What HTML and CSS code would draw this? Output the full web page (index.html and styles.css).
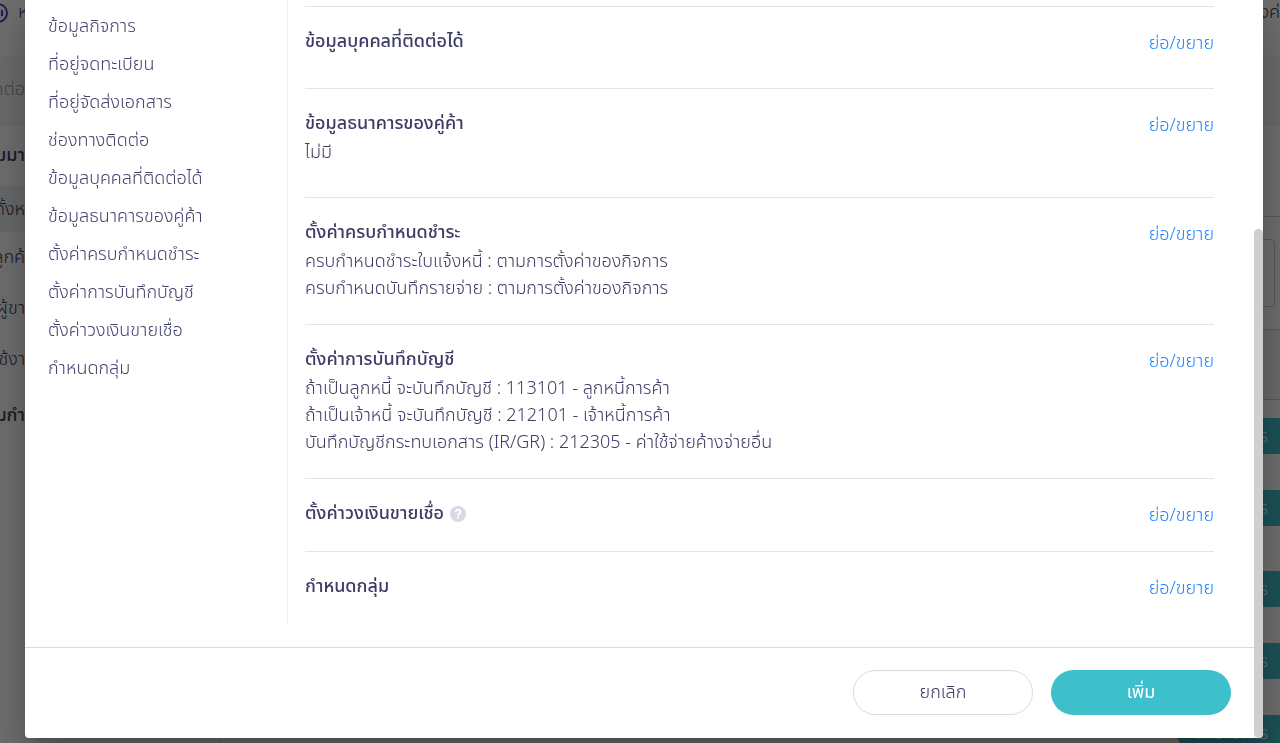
FILE: index.html
```html
<!DOCTYPE html>
<html lang="th">
<head>
<meta charset="utf-8">
<meta name="viewport" content="width=device-width, initial-scale=1">
<title>เพิ่มผู้ติดต่อ</title>
<link rel="stylesheet" href="styles.css">
</head>
<body>
<div class="app">
  <header class="topbar">
    <svg class="logo" viewBox="0 0 20 20" aria-hidden="true"><circle cx="10" cy="10" r="9"/><path d="M14 7v6"/></svg>
    <span class="topbar-item">ห</span>
    <span class="topbar-item topbar-end">งค่</span>
  </header>
  <div class="crumb"><span>ติดต่อ</span></div>
  <div class="workspace">
    <div class="side">
      <strong class="side-title">ุ่มมา</strong>
      <span class="side-item side-active">ทั้งห</span>
      <span class="side-item">ลูกค้</span>
      <span class="side-item">ผู้ขา</span>
      <span class="side-item">ใช้งา</span>
      <strong class="side-title">ุ่มกำ</strong>
    </div>
    <div class="board">
      <div class="board-top"></div>
      <div class="board-search"><div class="search-box"></div></div>
      <div class="board-head"></div>
      <div class="board-row"><button class="row-btn" type="button">ร</button></div>
      <div class="board-row row-tall"><button class="row-btn" type="button">ร</button></div>
      <div class="board-row"><button class="row-btn" type="button">ร</button></div>
      <div class="board-row"><button class="row-btn" type="button">ร</button></div>
      <div class="board-row"><button class="row-btn" type="button">ทำรายการ</button></div>
    </div>
  </div>
</div>

<div class="overlay">
  <div class="modal" role="dialog" aria-modal="true" aria-label="ผู้ติดต่อ">
    <div class="modal-main">
      <div class="modal-body">
        <nav class="menu">
          <a href="#business">ข้อมูลกิจการ</a>
          <a href="#registered">ที่อยู่จดทะเบียน</a>
          <a href="#shipping">ที่อยู่จัดส่งเอกสาร</a>
          <a href="#channel">ช่องทางติดต่อ</a>
          <a href="#person">ข้อมูลบุคคลที่ติดต่อได้</a>
          <a href="#bank">ข้อมูลธนาคารของคู่ค้า</a>
          <a href="#due">ตั้งค่าครบกำหนดชำระ</a>
          <a href="#account">ตั้งค่าการบันทึกบัญชี</a>
          <a href="#credit">ตั้งค่าวงเงินขายเชื่อ</a>
          <a href="#group">กำหนดกลุ่ม</a>
        </nav>
        <div class="sections">
          <section class="section section-list" id="person">
            <div class="info"><h3>ข้อมูลบุคคลที่ติดต่อได้</h3></div>
            <a class="toggle" href="#person">ย่อ/ขยาย</a>
          </section>
          <section class="section section-list" id="bank">
            <div class="info"><h3>ข้อมูลธนาคารของคู่ค้า</h3><p>ไม่มี</p></div>
            <a class="toggle" href="#bank">ย่อ/ขยาย</a>
          </section>
          <section class="section" id="due">
            <div class="info"><h3>ตั้งค่าครบกำหนดชำระ</h3><p>ครบกำหนดชำระใบแจ้งหนี้ : ตามการตั้งค่าของกิจการ</p><p>ครบกำหนดบันทึกรายจ่าย : ตามการตั้งค่าของกิจการ</p></div>
            <a class="toggle" href="#due">ย่อ/ขยาย</a>
          </section>
          <section class="section" id="account">
            <div class="info"><h3>ตั้งค่าการบันทึกบัญชี</h3><p>ถ้าเป็นลูกหนี้ จะบันทึกบัญชี : 113101 - ลูกหนี้การค้า</p><p>ถ้าเป็นเจ้าหนี้ จะบันทึกบัญชี : 212101 - เจ้าหนี้การค้า</p><p>บันทึกบัญชีกระทบเอกสาร (IR/GR) : 212305 - ค่าใช้จ่ายค้างจ่ายอื่น</p></div>
            <a class="toggle" href="#account">ย่อ/ขยาย</a>
          </section>
          <section class="section" id="credit">
            <div class="info"><h3>ตั้งค่าวงเงินขายเชื่อ <svg class="help" viewBox="0 0 16 16" aria-hidden="true"><circle cx="8" cy="8" r="8"/><path d="M5.6 6.2C5.6 3 10.6 3.2 10.5 6.1C10.5 7.8 8 7.7 8 9.4"/><rect x="7" y="10.8" width="2" height="2"/></svg></h3></div>
            <a class="toggle" href="#credit">ย่อ/ขยาย</a>
          </section>
          <section class="section" id="group">
            <div class="info"><h3>กำหนดกลุ่ม</h3></div>
            <a class="toggle" href="#group">ย่อ/ขยาย</a>
          </section>
        </div>
      </div>
      <footer class="modal-footer">
        <button class="btn btn-outline" type="button">ยกเลิก</button>
        <button class="btn btn-primary" type="button">เพิ่ม</button>
      </footer>
    </div>
    <div class="scrollbar"><div class="thumb"></div></div>
  </div>
</div>
</body>
</html>
```
FILE: styles.css
```css
* { box-sizing: border-box; }

body {
  margin: 0;
  height: 100vh;
  overflow: hidden;
  font-family: "Noto Sans Thai", "IBM Plex Sans Thai", "Noto Sans", sans-serif;
  font-size: 18px;
  font-weight: 300;
  color: #3c3c64;
}

h3, p { margin: 0; }
a { text-decoration: none; }
button { font: inherit; }

/* Page under the dialog */
.app { height: 100vh; overflow: hidden; background: #fff; }
.topbar {
  display: flex;
  align-items: center;
  height: 55px;
  padding-bottom: 30px;
  box-shadow: 0 1px 4px rgba(0, 0, 0, 0.4);
}
.logo { width: 20px; flex: none; margin-left: -12px; fill: none; stroke: #4a3fd0; stroke-width: 2; }
.topbar-item { margin-left: 10px; white-space: nowrap; }
.topbar-end { margin-left: auto; }
.crumb {
  display: flex;
  align-items: center;
  height: 70px;
  background: #f7f7fa;
  border-bottom: 1px solid #ececf0;
  color: #9a9aa8;
}
.crumb span { width: 25px; display: flex; justify-content: flex-end; white-space: nowrap; }
.workspace { display: flex; }
.side { width: 220px; height: 618px; border-right: 1px solid #ddd; }
.side-title, .side-item {
  display: flex;
  align-items: center;
  justify-content: flex-end;
  width: 25px;
  height: 51px;
  white-space: nowrap;
}
.side-title { height: 61px; font-weight: 500; }
.side-active { height: 46px; background: #eef1f1; }
.board { flex: 1; }
.board-top { height: 92px; border-bottom: 1px solid #ccc; }
.board-search { height: 113px; padding: 22px 5px 22px 20px; border-bottom: 1px solid #ccc; }
.search-box { height: 68px; border: 1px solid #ccc; border-radius: 4px; }
.board-head { height: 70px; background: #f4f4f4; border-bottom: 1px solid #ccc; }
.board-row { display: flex; justify-content: flex-end; height: 72px; padding-top: 18px; }
.row-tall { height: 81px; }
.row-btn {
  width: 103px;
  height: 36px;
  padding: 0 12px 0 0;
  border: 0;
  border-radius: 18px 0 0 18px;
  background: #3ebfcc;
  color: #fff;
  text-align: right;
}

/* Dialog */
.overlay {
  position: fixed;
  inset: 0;
  padding: 0 17px 5px 25px;
  background: rgba(0, 0, 0, 0.57);
}
.modal {
  display: flex;
  background: #fff;
  border-radius: 0 0 4px 4px;
  box-shadow: 0 11px 15px -7px rgba(0, 0, 0, 0.2), 0 24px 38px 3px rgba(0, 0, 0, 0.14), 0 9px 46px 8px rgba(0, 0, 0, 0.12);
}
.modal-main { flex: 1; }
.modal-body { display: flex; padding: 0 40px 23px 0; }
.menu {
  display: flex;
  flex-direction: column;
  width: 263px;
  padding: 8px 0 0 23px;
  border-right: 1px solid #f0f0f0;
}
.menu a { height: 38px; line-height: 38px; color: #44446f; }
.sections { flex: 1; padding: 6px 0 0 17px; }
.section {
  display: flex;
  justify-content: space-between;
  padding: 21px 0 22px;
  border-top: 1px solid #e4e4e4;
}
.section-list { padding-bottom: 31px; }
.info h3 { display: flex; align-items: center; gap: 6px; padding-bottom: 1px; font-size: 18px; font-weight: 500; line-height: 28px; }
.info p { line-height: 27px; }
.help { width: 16px; height: 16px; fill: #d9d9e6; }
.help path { fill: none; stroke: #fff; stroke-width: 2; }
.help rect { fill: #fff; }
.toggle { height: 28px; line-height: 32px; color: #1f86ff; }
.modal-footer {
  display: flex;
  justify-content: flex-end;
  gap: 18px;
  padding: 22px 23px 23px;
  border-top: 1px solid #d9d9e6;
}
.btn { width: 180px; height: 45px; border-radius: 23px; }
.btn-outline { border: 1px solid #d9d9e6; background: #fff; color: #37375f; }
.btn-primary { border: 0; background: #3ebfcc; color: #fff; font-weight: 400; }
.scrollbar { display: flex; align-items: flex-end; width: 9px; }
.thumb { width: 9px; height: 69%; border-radius: 5px; background: #cfcfcf; }
```
